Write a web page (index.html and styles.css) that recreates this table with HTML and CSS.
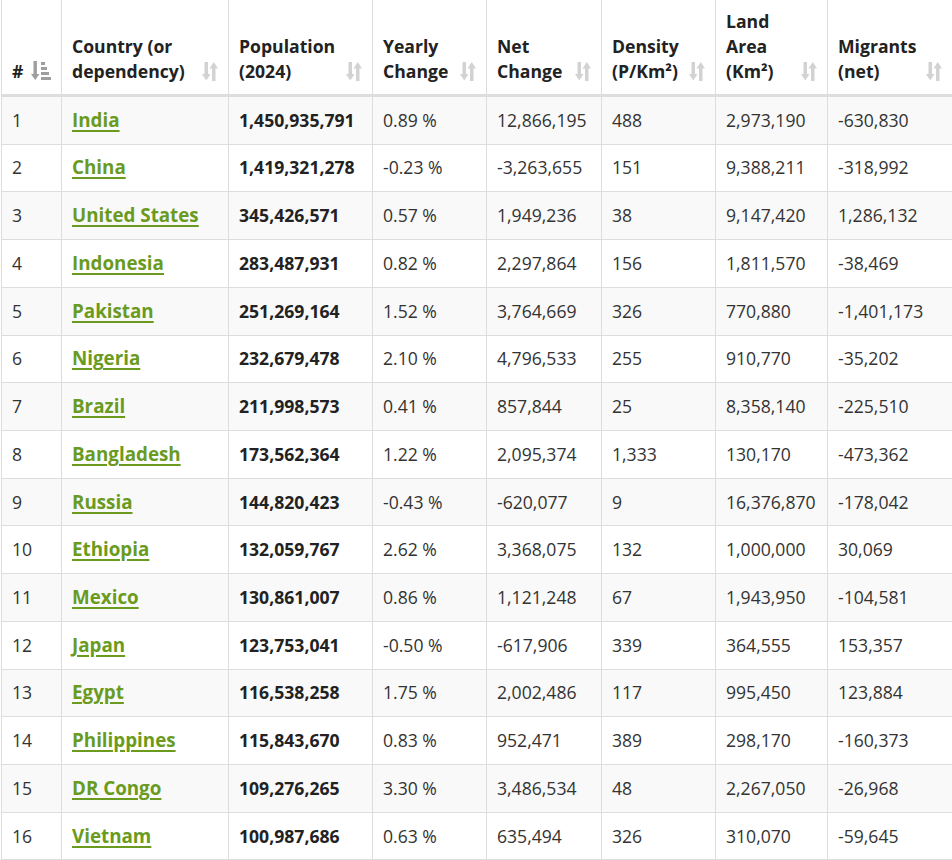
FILE: index.html
```html
<!DOCTYPE html>
<html lang="en">
<head>
<meta charset="utf-8">
<title>Population by Country</title>
<link rel="stylesheet" href="styles.css">
</head>
<body>
<table class="pop-table">
  <thead>
    <tr>
      <th class="c-rank"><div class="th-inner"><span class="label">#</span><svg class="sort active" viewBox="0 0 20 20" width="20" height="20"><rect x="2.5" y="0" width="3.4" height="14"/><polygon points="0,13 8.4,13 4.2,19"/><rect x="10" y="1" width="4" height="3"/><rect x="10" y="6" width="6" height="3"/><rect x="10" y="11" width="8" height="3"/><rect x="10" y="16" width="10" height="3"/></svg></div></th>
      <th class="c-country"><div class="th-inner"><span class="label">Country (or dependency)</span><svg class="sort" viewBox="0 0 16 19" width="16" height="19"><rect x="2.5" y="0" width="3.5" height="13"/><polygon points="0,12 8.5,12 4.25,18.5"/><polygon points="7.5,6.5 16,6.5 11.75,0"/><rect x="10" y="6" width="3.5" height="13"/></svg></div></th>
      <th class="c-pop"><div class="th-inner"><span class="label">Population (2024)</span><svg class="sort" viewBox="0 0 16 19" width="16" height="19"><rect x="2.5" y="0" width="3.5" height="13"/><polygon points="0,12 8.5,12 4.25,18.5"/><polygon points="7.5,6.5 16,6.5 11.75,0"/><rect x="10" y="6" width="3.5" height="13"/></svg></div></th>
      <th class="c-yc"><div class="th-inner"><span class="label">Yearly Change</span><svg class="sort" viewBox="0 0 16 19" width="16" height="19"><rect x="2.5" y="0" width="3.5" height="13"/><polygon points="0,12 8.5,12 4.25,18.5"/><polygon points="7.5,6.5 16,6.5 11.75,0"/><rect x="10" y="6" width="3.5" height="13"/></svg></div></th>
      <th class="c-nc"><div class="th-inner"><span class="label">Net Change</span><svg class="sort" viewBox="0 0 16 19" width="16" height="19"><rect x="2.5" y="0" width="3.5" height="13"/><polygon points="0,12 8.5,12 4.25,18.5"/><polygon points="7.5,6.5 16,6.5 11.75,0"/><rect x="10" y="6" width="3.5" height="13"/></svg></div></th>
      <th class="c-den"><div class="th-inner"><span class="label">Density (P/Km²)</span><svg class="sort" viewBox="0 0 16 19" width="16" height="19"><rect x="2.5" y="0" width="3.5" height="13"/><polygon points="0,12 8.5,12 4.25,18.5"/><polygon points="7.5,6.5 16,6.5 11.75,0"/><rect x="10" y="6" width="3.5" height="13"/></svg></div></th>
      <th class="c-land"><div class="th-inner"><span class="label">Land Area (Km²)</span><svg class="sort" viewBox="0 0 16 19" width="16" height="19"><rect x="2.5" y="0" width="3.5" height="13"/><polygon points="0,12 8.5,12 4.25,18.5"/><polygon points="7.5,6.5 16,6.5 11.75,0"/><rect x="10" y="6" width="3.5" height="13"/></svg></div></th>
      <th class="c-mig"><div class="th-inner"><span class="label">Migrants (net)</span><svg class="sort" viewBox="0 0 16 19" width="16" height="19"><rect x="2.5" y="0" width="3.5" height="13"/><polygon points="0,12 8.5,12 4.25,18.5"/><polygon points="7.5,6.5 16,6.5 11.75,0"/><rect x="10" y="6" width="3.5" height="13"/></svg></div></th>
    </tr>
  </thead>
  <tbody>
    <tr><td>1</td><td><a href="#">India</a></td><td class="b">1,450,935,791</td><td>0.89 %</td><td>12,866,195</td><td>488</td><td>2,973,190</td><td>-630,830</td></tr>
    <tr><td>2</td><td><a href="#">China</a></td><td class="b">1,419,321,278</td><td>-0.23 %</td><td>-3,263,655</td><td>151</td><td>9,388,211</td><td>-318,992</td></tr>
    <tr><td>3</td><td><a href="#">United States</a></td><td class="b">345,426,571</td><td>0.57 %</td><td>1,949,236</td><td>38</td><td>9,147,420</td><td>1,286,132</td></tr>
    <tr><td>4</td><td><a href="#">Indonesia</a></td><td class="b">283,487,931</td><td>0.82 %</td><td>2,297,864</td><td>156</td><td>1,811,570</td><td>-38,469</td></tr>
    <tr><td>5</td><td><a href="#">Pakistan</a></td><td class="b">251,269,164</td><td>1.52 %</td><td>3,764,669</td><td>326</td><td>770,880</td><td>-1,401,173</td></tr>
    <tr><td>6</td><td><a href="#">Nigeria</a></td><td class="b">232,679,478</td><td>2.10 %</td><td>4,796,533</td><td>255</td><td>910,770</td><td>-35,202</td></tr>
    <tr><td>7</td><td><a href="#">Brazil</a></td><td class="b">211,998,573</td><td>0.41 %</td><td>857,844</td><td>25</td><td>8,358,140</td><td>-225,510</td></tr>
    <tr><td>8</td><td><a href="#">Bangladesh</a></td><td class="b">173,562,364</td><td>1.22 %</td><td>2,095,374</td><td>1,333</td><td>130,170</td><td>-473,362</td></tr>
    <tr><td>9</td><td><a href="#">Russia</a></td><td class="b">144,820,423</td><td>-0.43 %</td><td>-620,077</td><td>9</td><td>16,376,870</td><td>-178,042</td></tr>
    <tr><td>10</td><td><a href="#">Ethiopia</a></td><td class="b">132,059,767</td><td>2.62 %</td><td>3,368,075</td><td>132</td><td>1,000,000</td><td>30,069</td></tr>
    <tr><td>11</td><td><a href="#">Mexico</a></td><td class="b">130,861,007</td><td>0.86 %</td><td>1,121,248</td><td>67</td><td>1,943,950</td><td>-104,581</td></tr>
    <tr><td>12</td><td><a href="#">Japan</a></td><td class="b">123,753,041</td><td>-0.50 %</td><td>-617,906</td><td>339</td><td>364,555</td><td>153,357</td></tr>
    <tr><td>13</td><td><a href="#">Egypt</a></td><td class="b">116,538,258</td><td>1.75 %</td><td>2,002,486</td><td>117</td><td>995,450</td><td>123,884</td></tr>
    <tr><td>14</td><td><a href="#">Philippines</a></td><td class="b">115,843,670</td><td>0.83 %</td><td>952,471</td><td>389</td><td>298,170</td><td>-160,373</td></tr>
    <tr><td>15</td><td><a href="#">DR Congo</a></td><td class="b">109,276,265</td><td>3.30 %</td><td>3,486,534</td><td>48</td><td>2,267,050</td><td>-26,968</td></tr>
    <tr><td>16</td><td><a href="#">Vietnam</a></td><td class="b">100,987,686</td><td>0.63 %</td><td>635,494</td><td>326</td><td>310,070</td><td>-59,645</td></tr>
  </tbody>
</table>
</body>
</html>
```

FILE: styles.css
```css
html, body {
  margin: 0;
  padding: 0;
  background: #fff;
  overflow: hidden;
}

body {
  font-family: "Open Sans", "Noto Sans", "Liberation Sans", sans-serif;
  font-size: 17.6px;
  line-height: 1.42857;
  color: #333;
}

.pop-table {
  margin-left: 1px;
  width: 951px;
  table-layout: fixed;
  border-collapse: separate;
  border-spacing: 0;
  border-left: 1px solid #ddd;
}

.pop-table th,
.pop-table td {
  box-sizing: border-box;
  border-right: 1px solid #ddd;
  border-bottom: 1px solid #ddd;
  text-align: left;
}

.pop-table th:last-child,
.pop-table td:last-child {
  border-right: none;
}

.pop-table th {
  padding: 8.8px 10px 9.8px 10px;
  vertical-align: bottom;
  font-weight: 700;
  color: #222;
  border-bottom: 3px solid #ddd;
}

.th-inner {
  display: flex;
  align-items: flex-end;
  justify-content: space-between;
  gap: 6px;
}

.th-inner .label {
  flex: 1 1 auto;
  min-width: 0;
}

.sort {
  flex: none;
  fill: #d2d2d2;
  margin-bottom: 3px;
}

.sort.active {
  fill: #9e9e9e;
  margin-bottom: 3px;
}

.c-rank { width: 60px; }
.c-country { width: 167px; }
.c-pop { width: 144px; }
.c-yc { width: 114px; }
.c-nc { width: 115px; }
.c-den { width: 114px; }
.c-land { width: 112px; }
.c-mig { width: 124px; }

.pop-table td {
  padding: 10.8px 10px;
  vertical-align: middle;
  white-space: nowrap;
}

.pop-table tbody tr:nth-child(odd) td {
  background: #f9f9f9;
}

.pop-table td.b {
  font-weight: 700;
  color: #222;
}

.pop-table a {
  color: #6a9b1e;
  font-size: 18.8px;
  line-height: 1;
  font-weight: 700;
  text-decoration: underline;
  text-decoration-thickness: 1.6px;
  text-underline-offset: 3px;
}
```
